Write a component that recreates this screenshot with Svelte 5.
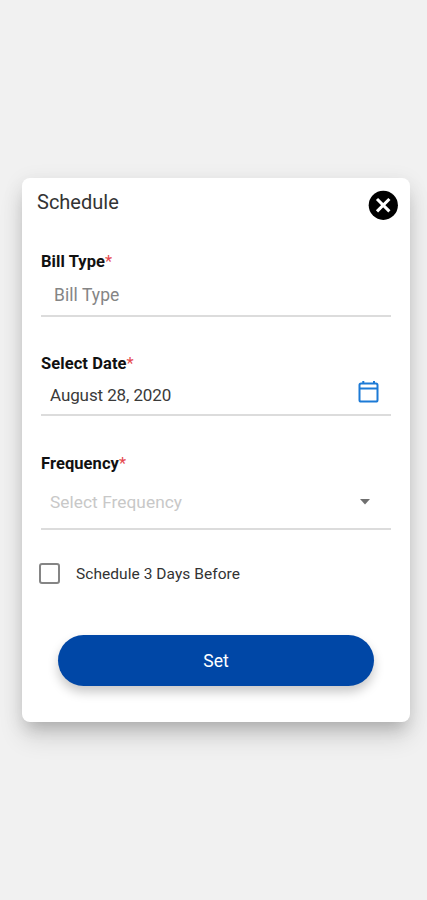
<script lang="ts">
  let billType = $state('');
  let date = $state('August 28, 2020');
  let frequency = $state('');
  let remindBefore = $state(false);
</script>

<main class="screen">
  <form class="card" onsubmit={(event) => event.preventDefault()}>
    <header class="header">
      <h1 class="title">Schedule</h1>
      <button type="button" class="close" aria-label="Close">
        <svg width="30" height="30" viewBox="0 0 30 30">
          <circle cx="15.3" cy="15.3" r="14.6" fill="#000" />
          <path d="M9 9l12.4 12.4M21.4 9L9 21.4" stroke="#fff" stroke-width="3.1" />
        </svg>
      </button>
    </header>

    <div class="field field-bill">
      <div class="label">Bill Type<span class="required">*</span></div>
      <div class="control">
        <span class="value placeholder">{billType || 'Bill Type'}</span>
      </div>
    </div>

    <div class="field field-date">
      <div class="label">Select Date<span class="required">*</span></div>
      <div class="control">
        <span class="value">{date}</span>
        <svg class="calendar" width="22" height="24" viewBox="0 0 22 24" fill="none" stroke="#1c7ad6" stroke-width="2">
          <rect x="2.5" y="3.4" width="18" height="18.2" rx="1.6" />
          <path d="M2.5 8.4h18M6.3 1v3M17 1v3" />
        </svg>
      </div>
    </div>

    <div class="field field-frequency">
      <div class="label">Frequency<span class="required">*</span></div>
      <div class="control">
        <span class="value empty">{frequency || 'Select Frequency'}</span>
        <svg class="arrow" width="12" height="6" viewBox="0 0 12 6">
          <path d="M1 0h10L6 5.5z" fill="#6f6f6f" />
        </svg>
      </div>
    </div>

    <label class="check">
      <input type="checkbox" bind:checked={remindBefore} />
      <span>Schedule 3 Days Before</span>
    </label>

    <button type="submit" class="submit">Set</button>
  </form>
</main>

<style>
  :global(body) {
    background: #f1f1f1;
  }

  .screen {
    box-sizing: border-box;
    min-height: 900px;
    padding: 178px 17px 0 22px;
    font-family: Roboto, sans-serif;
    overflow: hidden;
  }

  .card {
    box-sizing: border-box;
    height: 544px;
    padding: 12px 19px 0;
    background: #fff;
    border-radius: 8px;
    box-shadow:
      0 11px 15px -7px rgba(0, 0, 0, 0.16),
      0 16px 24px 0 rgba(0, 0, 0, 0.12),
      0 4px 20px 3px rgba(0, 0, 0, 0.06);
  }

  .header {
    display: flex;
    justify-content: space-between;
    align-items: flex-start;
    height: 60px;
    margin: 0 -7px 0 -4px;
  }

  .title {
    margin: 0;
    font-size: 20px;
    line-height: 24px;
    font-weight: 400;
    color: #333;
  }

  .close {
    display: block;
    padding: 0;
    border: none;
    background: none;
    cursor: pointer;
  }

  .close svg {
    display: block;
  }

  .label {
    font-size: 16.5px;
    line-height: 24px;
    font-weight: 700;
    letter-spacing: 0.08px;
    color: #111;
  }

  .required {
    font-weight: 400;
    letter-spacing: 0;
    color: #e5484d;
  }

  .control {
    box-sizing: border-box;
    display: flex;
    align-items: center;
    justify-content: space-between;
    border-bottom: 2px solid #dcdcdc;
  }

  .field-bill {
    margin-bottom: 35px;
  }

  .field-bill .control {
    height: 43px;
    padding-left: 13px;
  }

  .field-date {
    margin-bottom: 36px;
  }

  .field-date .control {
    height: 40px;
    padding: 0 12px 0 9px;
  }

  .field-frequency .control {
    height: 54px;
    padding: 0 20px 0 9px;
  }

  .value {
    font-size: 17px;
    letter-spacing: -0.1px;
    color: #3a3a3a;
  }

  .placeholder {
    font-size: 17.5px;
    letter-spacing: 0.05px;
    color: #858585;
  }

  .empty {
    font-size: 17.3px;
    letter-spacing: 0.05px;
    color: #c8c8c8;
  }

  .calendar {
    margin-bottom: 7px;
  }

  .check {
    display: flex;
    align-items: center;
    gap: 16px;
    height: 22px;
    margin: 33px 0 50px -2px;
    font-size: 15.5px;
    letter-spacing: 0.05px;
    color: #333;
    cursor: pointer;
  }

  .check input {
    appearance: none;
    box-sizing: border-box;
    width: 21px;
    height: 21px;
    margin: 0 0 2px;
    border: 2px solid #858585;
    border-radius: 3px;
  }

  .submit {
    display: block;
    width: 316px;
    height: 51px;
    margin-left: 17px;
    border: none;
    border-radius: 26px;
    background: #0047a6;
    color: #fff;
    font-family: inherit;
    font-size: 17.5px;
    box-shadow: 0 6px 11px rgba(0, 0, 0, 0.22);
    cursor: pointer;
  }
</style>
